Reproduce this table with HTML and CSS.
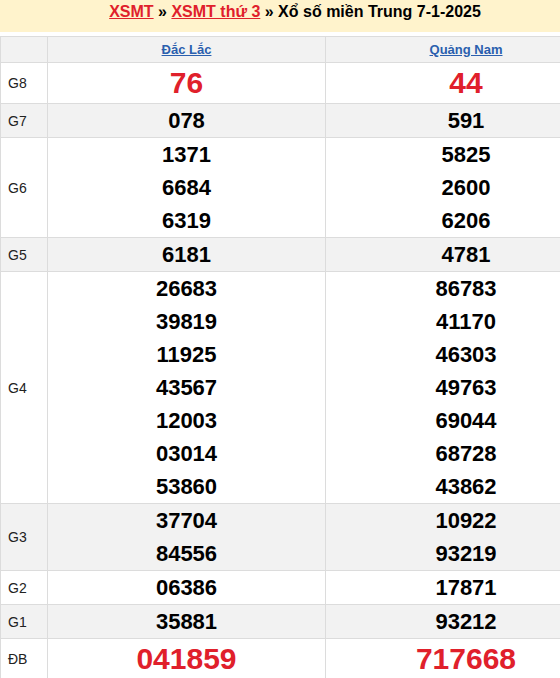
FILE: index.html
```html
<!DOCTYPE html>
<html lang="vi">
<head>
<meta charset="utf-8">
<title>XSMT 7-1-2025</title>
<link rel="stylesheet" href="styles.css">
</head>
<body>
<div class="page">
  <div class="title-bar">
    <a class="crumb" href="#">XSMT</a> » <a class="crumb" href="#">XSMT thứ 3</a> » Xổ số miền Trung 7-1-2025
  </div>
  <table class="results">
    <colgroup>
      <col class="c-label">
      <col class="c-prov1">
      <col class="c-prov2">
    </colgroup>
    <thead>
      <tr class="alt head">
        <th></th>
        <th><a href="#">Đắc Lắc</a></th>
        <th><a href="#">Quảng Nam</a></th>
      </tr>
    </thead>
    <tbody>
      <tr class="big">
        <td class="lbl">G8</td>
        <td><div class="num red">76</div></td>
        <td><div class="num red">44</div></td>
      </tr>
      <tr class="alt">
        <td class="lbl">G7</td>
        <td><div class="num">078</div></td>
        <td><div class="num">591</div></td>
      </tr>
      <tr>
        <td class="lbl">G6</td>
        <td><div class="num">1371</div><div class="num">6684</div><div class="num">6319</div></td>
        <td><div class="num">5825</div><div class="num">2600</div><div class="num">6206</div></td>
      </tr>
      <tr class="alt">
        <td class="lbl">G5</td>
        <td><div class="num">6181</div></td>
        <td><div class="num">4781</div></td>
      </tr>
      <tr>
        <td class="lbl">G4</td>
        <td>
          <div class="num">26683</div><div class="num">39819</div><div class="num">11925</div><div class="num">43567</div><div class="num">12003</div><div class="num">03014</div><div class="num">53860</div>
        </td>
        <td>
          <div class="num">86783</div><div class="num">41170</div><div class="num">46303</div><div class="num">49763</div><div class="num">69044</div><div class="num">68728</div><div class="num">43862</div>
        </td>
      </tr>
      <tr class="alt">
        <td class="lbl">G3</td>
        <td><div class="num">37704</div><div class="num">84556</div></td>
        <td><div class="num">10922</div><div class="num">93219</div></td>
      </tr>
      <tr>
        <td class="lbl">G2</td>
        <td><div class="num">06386</div></td>
        <td><div class="num">17871</div></td>
      </tr>
      <tr class="alt">
        <td class="lbl">G1</td>
        <td><div class="num">35881</div></td>
        <td><div class="num">93212</div></td>
      </tr>
      <tr class="big">
        <td class="lbl">ĐB</td>
        <td><div class="num red">041859</div></td>
        <td><div class="num red">717668</div></td>
      </tr>
    </tbody>
  </table>
</div>
</body>
</html>
```
FILE: styles.css
```css
html, body {
  margin: 0;
  padding: 0;
  overflow: hidden;
  background: #fff;
}
body {
  font-family: "Liberation Sans", Arial, sans-serif;
  color: #000;
}
.page {
  width: 606px;
}
.title-bar {
  background: #fff3cc;
  text-align: center;
  font-size: 16px;
  font-weight: bold;
  line-height: 20px;
  padding: 2px 16px 10px 0;
  margin-bottom: 4px;
  color: #000;
}
.title-bar .crumb {
  color: #e0202b;
  text-decoration: underline;
}
.results {
  width: 606px;
  border-collapse: collapse;
  table-layout: fixed;
}
.c-label { width: 47px; }
.c-prov1 { width: 278px; }
.c-prov2 { width: 281px; }
.results th,
.results td {
  border: 1px solid #dcdcdc;
  padding: 0;
  text-align: center;
  vertical-align: middle;
}
.results tr.alt th,
.results tr.alt td {
  background: #f2f2f2;
}
.results th {
  line-height: 25px;
  font-size: 13px;
  font-weight: bold;
}
.results th a {
  color: #2a5fae;
  text-decoration: underline;
}
.results td.lbl {
  text-align: left;
  padding-left: 7px;
  font-size: 14px;
  color: #222;
}
.num {
  font-size: 22px;
  font-weight: bold;
  line-height: 33px;
  color: #000;
}
.big .num {
  font-size: 30px;
  line-height: 40px;
}
.num.red {
  color: #e0202b;
}
```
